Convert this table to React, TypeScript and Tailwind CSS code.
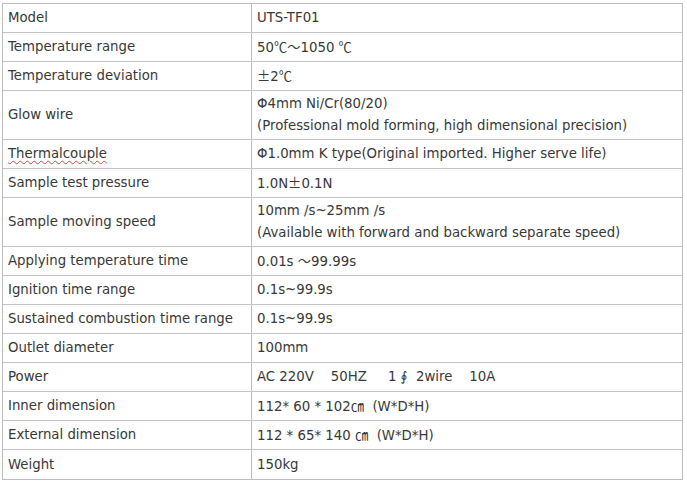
const rows: { label: string; value: string[]; tall?: boolean; spell?: boolean }[] = [
  { label: "Model", value: ["UTS-TF01"] },
  { label: "Temperature range", value: ["50℃～1050 ℃"] },
  { label: "Temperature deviation", value: ["±2℃"] },
  {
    label: "Glow wire",
    value: ["Φ4mm Ni/Cr(80/20)", "(Professional mold forming, high dimensional precision)"],
    tall: true,
  },
  { label: "Thermalcouple", value: ["Φ1.0mm K type(Original imported. Higher serve life)"], spell: true },
  { label: "Sample test pressure", value: ["1.0N±0.1N"] },
  {
    label: "Sample moving speed",
    value: ["10mm /s~25mm /s", "(Available with forward and backward separate speed)"],
    tall: true,
  },
  { label: "Applying temperature time", value: ["0.01s ～99.99s"] },
  { label: "Ignition time range", value: ["0.1s~99.9s"] },
  { label: "Sustained combustion time range", value: ["0.1s~99.9s"] },
  { label: "Outlet diameter", value: ["100mm"] },
  { label: "Power", value: ["AC 220V\u00a0\u00a0\u00a0 50HZ\u00a0\u00a0\u00a0\u00a0 1 ∮\u00a0 2wire\u00a0\u00a0\u00a0 10A"] },
  { label: "Inner dimension", value: ["112* 60 * 102㎝ \u00a0(W*D*H)"] },
  { label: "External dimension", value: ["112 * 65* 140 ㎝ \u00a0(W*D*H)"] },
  { label: "Weight", value: ["150kg"] },
];

// wide symbols come from the CJK font, like in the original doc
function Val({ text }: { text: string }) {
  const parts = text.split(/([℃～㎝±])/);
  return (
    <>
      {parts.map((p, i) =>
        /^[℃～㎝±]$/.test(p) ? (
          <span key={i} style={{ fontFamily: '"Noto Sans CJK SC", sans-serif' }}>
            {p}
          </span>
        ) : (
          p
        )
      )}
    </>
  );
}

export default function App() {
  return (
    <div className="w-[687px] h-[483px] bg-white pt-[3px] pl-[2px]">
      <div
        className="w-[681px] border border-[#bdbdbd] text-[13.3px] text-[#383838]"
        style={{ fontFamily: '"DejaVu Sans", "Noto Sans CJK SC", sans-serif' }}
      >
        {rows.map((r, i) => (
          <div
            key={i}
            className={`flex ${r.tall ? "h-[49px]" : "h-[29px]"} ${i < rows.length - 1 ? "border-b border-[#c4c4c4]" : ""}`}
          >
            <div className="w-[249px] flex items-center pl-[5px] border-r border-[#bdbdbd]">
              {r.spell ? (
                <span className="underline decoration-wavy decoration-[#e04040] decoration-1 underline-offset-2">
                  {r.label}
                </span>
              ) : (
                r.label
              )}
            </div>
            <div className="flex-1 flex flex-col justify-center pl-[5px] leading-[22px]">
              {r.value.map((v, j) => (
                <div key={j} className="whitespace-pre">
                  <Val text={v} />
                </div>
              ))}
            </div>
          </div>
        ))}
      </div>
    </div>
  );
}
